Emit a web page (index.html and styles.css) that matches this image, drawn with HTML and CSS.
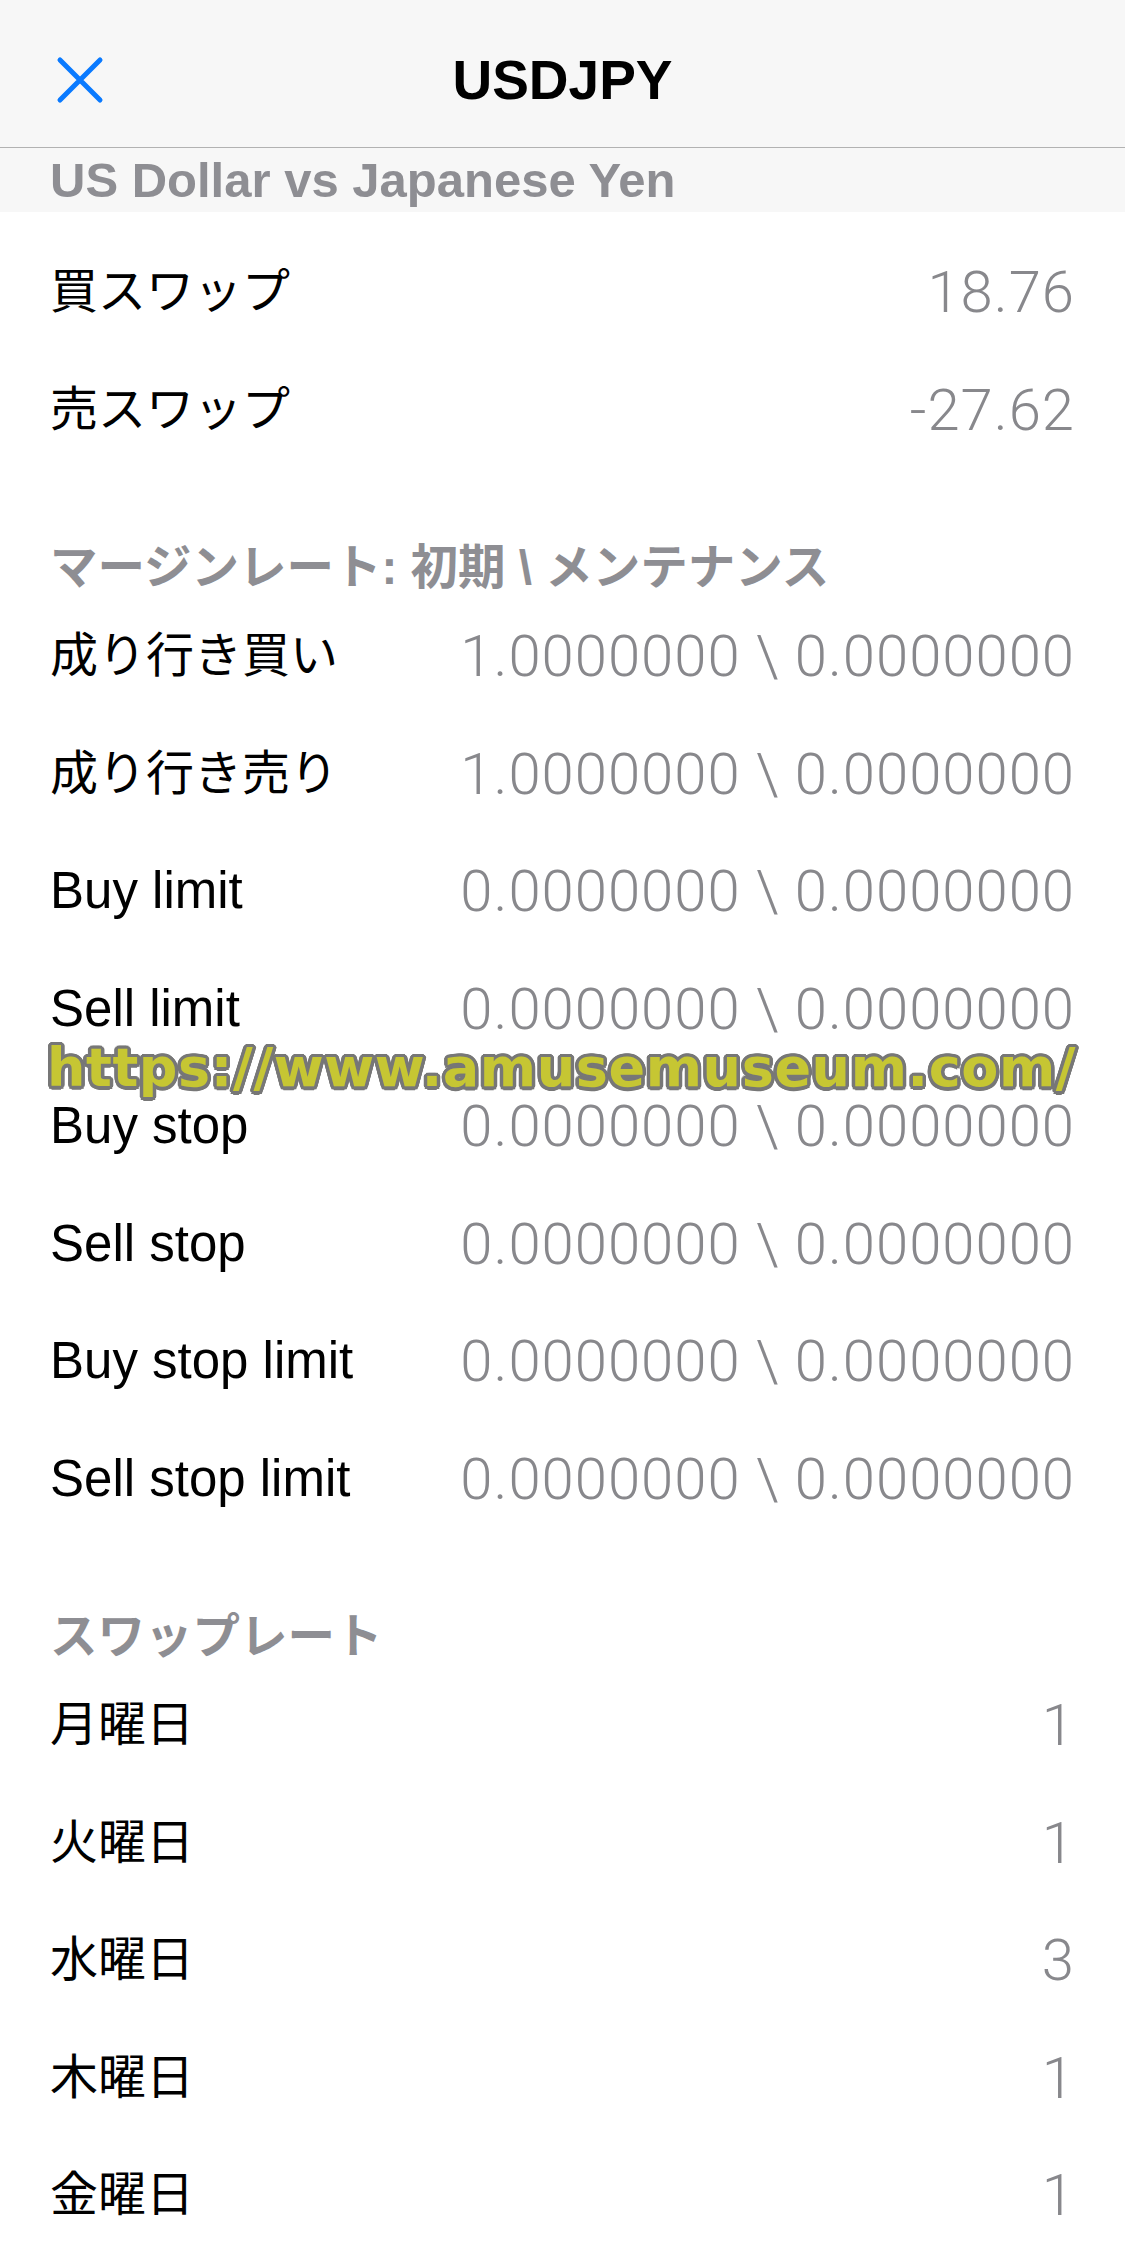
FILE: index.html
```html
<!DOCTYPE html>
<html lang="ja">

<head>
    <meta charset="UTF-8">
    <meta name="viewport" content="width=device-width, initial-scale=1.0">
    <title>USDJPY</title>
    <link rel="stylesheet" href="styles.css">
</head>

<body>
    <div class="screen">
        <header class="navbar">
            <div class="nav-left">
                <svg class="close-icon" viewBox="0 0 50 50">
                    <path d="M5 5 L45 45 M45 5 L5 45" />
                </svg>
            </div>
            <h1 class="nav-title">USDJPY</h1>
            <div></div>
        </header>
        <div class="subtitle">US Dollar vs Japanese Yen</div>

        <main class="content">
            <section class="group">
                <div class="row"><span class="label ja">買スワップ</span><span class="value">18.76</span></div>
                <div class="row"><span class="label ja">売スワップ</span><span class="value">-27.62</span></div>
            </section>

            <section class="group">
                <h2 class="group-title">マージンレート: 初期 \ メンテナンス</h2>
                <div class="row"><span class="label ja">成り行き買い</span><span class="value">1.0000000 \ 0.0000000</span></div>
                <div class="row"><span class="label ja">成り行き売り</span><span class="value">1.0000000 \ 0.0000000</span></div>
                <div class="row"><span class="label">Buy limit</span><span class="value">0.0000000 \ 0.0000000</span></div>
                <div class="row"><span class="label">Sell limit</span><span class="value">0.0000000 \ 0.0000000</span></div>
                <div class="row"><span class="label">Buy stop</span><span class="value">0.0000000 \ 0.0000000</span></div>
                <div class="row"><span class="label">Sell stop</span><span class="value">0.0000000 \ 0.0000000</span></div>
                <div class="row"><span class="label">Buy stop limit</span><span class="value">0.0000000 \ 0.0000000</span></div>
                <div class="row"><span class="label">Sell stop limit</span><span class="value">0.0000000 \ 0.0000000</span></div>
            </section>

            <section class="group">
                <h2 class="group-title">スワップレート</h2>
                <div class="row"><span class="label ja">月曜日</span><span class="value">1</span></div>
                <div class="row"><span class="label ja">火曜日</span><span class="value">1</span></div>
                <div class="row"><span class="label ja">水曜日</span><span class="value">3</span></div>
                <div class="row"><span class="label ja">木曜日</span><span class="value">1</span></div>
                <div class="row"><span class="label ja">金曜日</span><span class="value">1</span></div>
            </section>
        </main>

        <div class="watermark">https://www.amusemuseum.com/</div>
    </div>
</body>

</html>
```

FILE: styles.css
```css
body {
    margin: 0;
    background-color: white;
    font-family: "Liberation Sans", "Noto Sans CJK JP", sans-serif;
}

.screen {
    position: relative;
    width: 1125px;
    height: 2250px;
    overflow: hidden;
}

.navbar {
    display: grid;
    grid-template-columns: 1fr auto 1fr;
    align-items: center;
    height: 134px;
    padding-top: 13px;
    background-color: #f7f7f7;
    border-bottom: 1px solid #b2b2b2;
}

.close-icon {
    display: block;
    width: 50px;
    height: 50px;
    margin-left: 55px;
    fill: none;
    stroke: #0a7aff;
    stroke-width: 5;
    stroke-linecap: round;
}

.nav-title {
    margin: 0;
    font-size: 55px;
    font-weight: bold;
    line-height: 60px;
    color: black;
}

.subtitle {
    height: 64px;
    line-height: 64px;
    padding: 0 50px;
    background-color: #f7f7f7;
    color: #8e8e93;
    font-size: 49px;
    font-weight: bold;
}

.content {
    padding: 21.5px 50px 0;
}

.row {
    display: flex;
    justify-content: space-between;
    align-items: center;
    height: 117.5px;
}

.label {
    font-size: 51px;
    line-height: 60px;
    color: black;
}

.label.ja {
    font-size: 48px;
}

.value {
    font-family: Roboto, "Liberation Sans", sans-serif;
    font-weight: 300;
    font-size: 58px;
    letter-spacing: 1px;
    line-height: 60px;
    color: #88888c;
    white-space: nowrap;
}

.group-title {
    margin: 0;
    padding-top: 69px;
    line-height: 60px;
    font-size: 47.5px;
    font-weight: bold;
    color: #8e8e93;
}

.watermark {
    position: absolute;
    top: 1041px;
    left: 47px;
    font-family: "DejaVu Sans", sans-serif;
    font-weight: bold;
    font-size: 54px;
    line-height: 54px;
    letter-spacing: 0.6px;
    white-space: nowrap;
    color: #c6c633;
    text-shadow:
        3.5px 0 0 #777, -3.5px 0 0 #777, 0 3.5px 0 #777, 0 -3.5px 0 #777,
        2.5px 2.5px 0 #777, -2.5px 2.5px 0 #777, 2.5px -2.5px 0 #777, -2.5px -2.5px 0 #777,
        3.2px 1.3px 0 #777, -3.2px 1.3px 0 #777, 3.2px -1.3px 0 #777, -3.2px -1.3px 0 #777,
        1.3px 3.2px 0 #777, -1.3px 3.2px 0 #777, 1.3px -3.2px 0 #777, -1.3px -3.2px 0 #777;
}
```
